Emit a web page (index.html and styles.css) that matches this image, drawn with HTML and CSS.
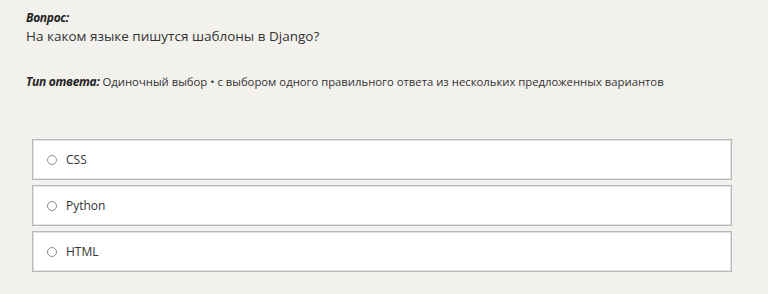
FILE: index.html
```html
<!DOCTYPE html>
<html>
<head>
    <title>Вопрос</title>
    <link rel="stylesheet" href="styles.css">
</head>
<body>

<div class="question">
    <div class="label">Вопрос:</div>
    <p class="text">На каком языке пишутся шаблоны в Django?</p>
</div>

<p class="type"><span class="label">Тип ответа:</span> Одиночный выбор • с выбором одного правильного ответа из нескольких предложенных вариантов</p>

<form class="answers">
    <label class="answer"><input type="radio" name="answer" value="css"> CSS</label>
    <label class="answer"><input type="radio" name="answer" value="python"> Python</label>
    <label class="answer"><input type="radio" name="answer" value="html"> HTML</label>
</form>

</body>
</html>
```

FILE: styles.css
```css
body {
    margin: 0;
    padding: 10px 26px 0 26px;
    font-family: "Open Sans", "Noto Sans", sans-serif;
    font-size: 12px;
    color: #333;
    background-color: #f2f1ee;
}
.label {
    font-weight: bold;
    font-style: italic;
    font-size: 12px;
    letter-spacing: -0.3px;
    color: #222;
}
.question .label {
    line-height: 16px;
}
.text {
    margin: 0;
    font-size: 13.5px;
    line-height: 20px;
}
.type {
    margin: 28px 0 0 0;
    line-height: 16px;
    font-size: 11.3px;
}
.answers {
    margin: 49px 10px 0 6px;
    display: flex;
    flex-direction: column;
    gap: 5px;
}
.answer {
    display: flex;
    align-items: center;
    gap: 9px;
    height: 39px;
    padding-left: 14px;
    background: #fff;
    border: 1px solid #b9b9b9;
    box-shadow: inset 0 0 0 1px #e2e2e2;
    font-size: 12px;
}
.answer input {
    -webkit-appearance: none;
    appearance: none;
    width: 10px;
    height: 10px;
    margin: 0;
    border: 1px solid #8e8e8e;
    border-radius: 50%;
    background: #fff;
}
```
